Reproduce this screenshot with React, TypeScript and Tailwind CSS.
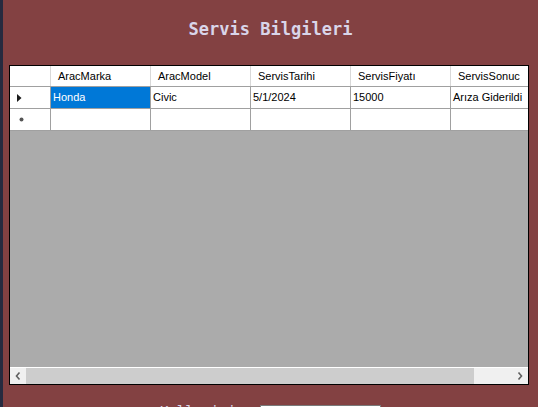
import React from "react";

const cols = ["AracMarka", "AracModel", "ServisTarihi", "ServisFiyatı", "ServisSonuc"];
const row = ["Honda", "Civic", "5/1/2024", "15000", "Arıza Giderildi"];

export default function App() {
  const sans = { fontFamily: '"Liberation Sans", Arial, sans-serif' };
  const mono = { fontFamily: '"DejaVu Sans Mono", monospace' };
  return (
    <div className="w-[538px] h-[407px] overflow-hidden flex bg-[#834142]">
      <div className="w-[3px] h-full bg-[#262a3f] shrink-0" />
      <div className="flex-1 flex flex-col">
        <div
          className="pt-[21px] h-[38px] text-[17px] leading-none font-bold text-[#d9d5e9] text-center"
          style={mono}
        >
          Servis Bilgileri
        </div>
        <div className="mt-[27px] ml-[6px] w-[520px] h-[320px] shrink-0 border border-black bg-[#ababab] flex flex-col text-[11px] text-black" style={sans}>
          <div className="flex-1 overflow-hidden flex flex-col">
            <div className="flex h-[21px] shrink-0 bg-white border-b border-[#a0a0a0]">
              <div className="w-[41px] shrink-0 border-r border-[#d8d8d8]" />
              {cols.map((c) => (
                <div key={c} className="w-[100px] shrink-0 border-r border-[#d8d8d8] flex items-center pl-[7px] whitespace-nowrap">
                  {c}
                </div>
              ))}
            </div>
            <div className="flex h-[22px] shrink-0 bg-white border-b border-[#a0a0a0]">
              <div className="w-[41px] shrink-0 border-r border-[#a0a0a0] flex items-center pl-[7px]">
                <svg width="5" height="8" viewBox="0 0 5 8">
                  <path d="M0 0 L4.5 4 L0 8 Z" fill="#1a1a1a" />
                </svg>
              </div>
              {row.map((c, i) => (
                <div
                  key={i}
                  className={
                    i === 0
                      ? "w-[100px] shrink-0 border-r border-[#a0a0a0] flex items-center pl-[2px] bg-[#0078d7] text-white whitespace-nowrap overflow-hidden"
                      : "w-[100px] shrink-0 border-r border-[#a0a0a0] flex items-center pl-[2px] whitespace-nowrap overflow-hidden"
                  }
                >
                  {c}
                </div>
              ))}
            </div>
            <div className="flex h-[22px] shrink-0 bg-white border-b border-[#a0a0a0]">
              <div className="w-[41px] shrink-0 border-r border-[#a0a0a0] flex items-center pl-[9px]">
                <svg width="5" height="5" viewBox="0 0 5 5">
                  <circle cx="2.5" cy="2.5" r="2" fill="#555" />
                </svg>
              </div>
              {cols.map((c) => (
                <div key={c} className="w-[100px] shrink-0 border-r border-[#a0a0a0]" />
              ))}
            </div>
          </div>
          <div className="h-[17px] shrink-0 border-t border-white bg-[#f0f0f0] flex">
            <div className="w-[16px] shrink-0 flex items-center justify-center">
              <svg width="6" height="8" viewBox="0 0 6 8">
                <path d="M4.5 0.5 L1.5 4 L4.5 7.5" stroke="#606060" strokeWidth="1.6" fill="none" />
              </svg>
            </div>
            <div className="w-[448px] shrink-0 bg-[#cdcdcd]" />
            <div className="flex-1" />
            <div className="w-[17px] shrink-0 flex items-center justify-center">
              <svg width="6" height="8" viewBox="0 0 6 8">
                <path d="M1.5 0.5 L4.5 4 L1.5 7.5" stroke="#606060" strokeWidth="1.6" fill="none" />
              </svg>
            </div>
          </div>
        </div>
        <div className="mt-[19px] pl-[157px] flex items-start">
          <div className="text-[14px] leading-none text-[#d9d5e9] w-[100px] shrink-0" style={mono}>
            Kullanici:
          </div>
          <div className="mt-[1px] w-[121px] h-[22px] bg-white border border-[#7a7a7a]" />
        </div>
      </div>
    </div>
  );
}
